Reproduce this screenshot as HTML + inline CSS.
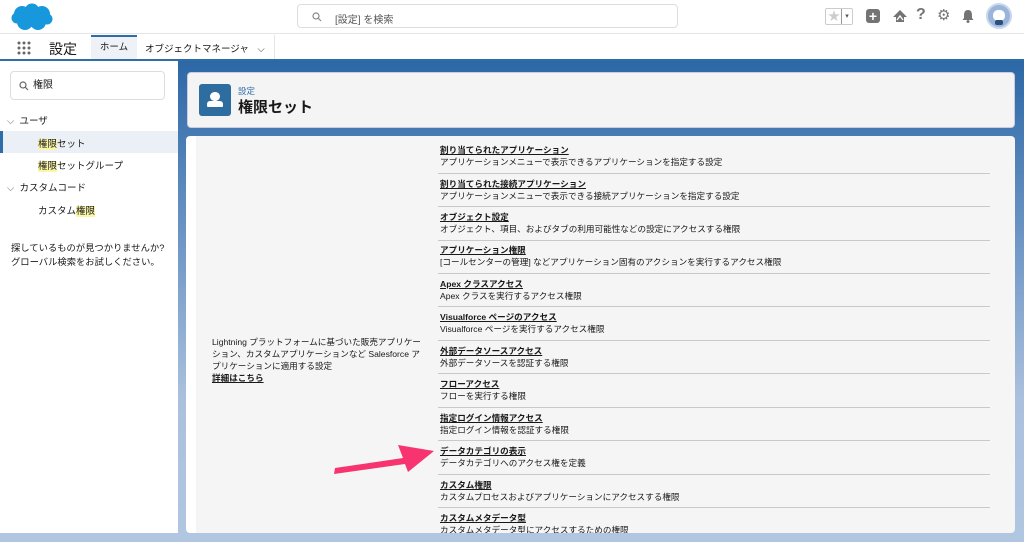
<!DOCTYPE html>
<html><head><meta charset="utf-8"><style>
*{box-sizing:border-box;margin:0;padding:0}
body{width:1024px;height:542px;overflow:hidden;font-family:"Liberation Sans","Noto Sans CJK JP",sans-serif;background:#fff;position:relative;color:#181818}
.top{position:absolute;left:0;top:0;width:1024px;height:34px;background:#fff;border-bottom:1px solid #e5e5e5}
.search{position:absolute;left:297px;top:4px;width:381px;height:24px;border:1px solid #ddd;border-radius:4px;font-size:10px;color:#555}
.nav{position:absolute;left:0;top:35px;width:1024px;height:26px;background:#fff;border-bottom:2px solid #2e6da8}
.bg{position:absolute;left:0;top:61px;width:1024px;height:481px;background:linear-gradient(#2c68a6,#6a93c4 35%,#aac0dd 70%,#b1c6e1)}
.side{position:absolute;left:0;top:61px;width:178px;height:481px;background:#fff}
.hl{background:#fbf6a8}
.card{position:absolute;background:#f4f4f4;border-radius:4px}
.row{position:absolute;left:440px;width:550px;font-size:8.6px;line-height:12px}
.row b{text-decoration:underline;font-weight:bold;display:block}
.line{position:absolute;left:438px;width:552px;height:1px;background:#c9c9c9}
</style></head><body>
<div class="top">
<svg style="position:absolute;left:11px;top:3px" width="42" height="28" viewBox="0 0 42 28"><g fill="#1798dc"><circle cx="11" cy="11" r="8"/><circle cx="21" cy="8" r="7.5"/><circle cx="31" cy="11" r="8"/><circle cx="14" cy="19" r="8"/><circle cx="27" cy="19" r="8"/><circle cx="6" cy="15" r="5.5"/><circle cx="36" cy="16" r="5.5"/></g></svg>
<div class="search"><svg style="position:absolute;left:14px;top:7px" width="10" height="10"><circle cx="4" cy="4" r="3" fill="none" stroke="#888" stroke-width="1.2"/><path d="M6 6 L9 9" stroke="#888" stroke-width="1.2"/></svg><span style="position:absolute;left:37px;top:6px">[設定] を検索</span></div>
<div style="position:absolute;left:825px;top:8px;width:28px;height:17px;border:1px solid #ccc;border-radius:2px;font-size:12px;color:#ccc;line-height:15px;padding-left:2px">★<span style="position:absolute;right:0;top:0;width:11px;height:15px;border-left:1px solid #999;font-size:7px;color:#555;text-align:center">▾</span></div>
<div style="position:absolute;left:866px;top:9px;width:14px;height:14px;background:#747474;border-radius:3px;color:#fff;font-size:14px;line-height:14px;text-align:center;font-weight:bold">+</div>
<svg style="position:absolute;left:892px;top:9px" width="16" height="14"><path d="M8 1 L15 8 L12 8 L12 13 L4 13 L4 8 L1 8 Z" fill="#747474"/><path d="M5 11 L8 7 L11 11" fill="none" stroke="#fff" stroke-width="1.3"/></svg>
<div style="position:absolute;left:916px;top:6px;font-size:16px;color:#747474;font-weight:bold">?</div>
<div style="position:absolute;left:937px;top:6px;font-size:15px;color:#747474">⚙</div>
<svg style="position:absolute;left:961px;top:9px" width="14" height="14"><path d="M7 1 C3.5 1 3 4 3 7 L3 9 L1.5 11 L12.5 11 L11 9 L11 7 C11 4 10.5 1 7 1 Z" fill="#747474"/><circle cx="7" cy="12.5" r="1.5" fill="#747474"/></svg>
<div style="position:absolute;left:986px;top:3px;width:26px;height:26px;border-radius:50%;background:#9ab5da;border:2px solid #c9d8ec"><div style="position:absolute;left:5px;top:5px;width:12px;height:11px;background:#fff;border-radius:5px"></div><div style="position:absolute;left:7px;top:15px;width:8px;height:5px;background:#2b4f7d;border-radius:2px"></div></div>
</div>
<div class="nav">
<svg style="position:absolute;left:17px;top:6px" width="14" height="14"><g fill="#666"><circle cx="2" cy="2" r="1.5"/><circle cx="7" cy="2" r="1.5"/><circle cx="12" cy="2" r="1.5"/><circle cx="2" cy="7" r="1.5"/><circle cx="7" cy="7" r="1.5"/><circle cx="12" cy="7" r="1.5"/><circle cx="2" cy="12" r="1.5"/><circle cx="7" cy="12" r="1.5"/><circle cx="12" cy="12" r="1.5"/></g></svg>
<div style="position:absolute;left:49px;top:4px;font-size:14px">設定</div>
<div style="position:absolute;left:91px;top:0;width:46px;height:24px;background:#eef1f6;border-top:2px solid #2e6da8;font-size:9.5px;text-align:center;line-height:21px">ホーム</div>
<div style="position:absolute;left:145px;top:6px;font-size:9.5px">オブジェクトマネージャ <span style="margin-left:6px;color:#555">⌵</span></div>
<div style="position:absolute;left:274px;top:0;width:1px;height:24px;background:#e5e5e5"></div>
</div>
<div class="bg"></div>
<div class="side">
<div style="position:absolute;left:10px;top:10px;width:155px;height:29px;border:1px solid #ddd;border-radius:4px;font-size:10px;line-height:27px;padding-left:22px"><svg style="position:absolute;left:8px;top:9px" width="10" height="10"><circle cx="4" cy="4" r="3" fill="none" stroke="#666" stroke-width="1.2"/><path d="M6 6 L9 9" stroke="#666" stroke-width="1.2"/></svg>権限</div>
<div style="position:absolute;left:7px;top:52px;font-size:9.5px"><span style="color:#777">⌵</span>&nbsp; ユーザ</div>
<div style="position:absolute;left:0;top:70px;width:178px;height:22px;background:#eaf0f6;border-left:3px solid #2e6da8"></div>
<div style="position:absolute;left:38px;top:75px;font-size:9.5px"><span class="hl">権限</span>セット</div>
<div style="position:absolute;left:38px;top:97px;font-size:9.5px"><span class="hl">権限</span>セットグループ</div>
<div style="position:absolute;left:7px;top:119px;font-size:9.5px"><span style="color:#777">⌵</span>&nbsp; カスタムコード</div>
<div style="position:absolute;left:38px;top:142px;font-size:9.5px">カスタム<span class="hl">権限</span></div>
<div style="position:absolute;left:11px;top:180px;font-size:9.3px;line-height:14px">探しているものが見つかりませんか?<br>グローバル検索をお試しください。</div>
</div>
<div class="card" style="left:187px;top:72px;width:828px;height:56px;border:1px solid #ccd">
<div style="position:absolute;left:11px;top:11px;width:32px;height:32px;background:#2e6da0;border-radius:3px"><div style="position:absolute;left:11px;top:8px;width:10px;height:9px;background:#fff;border-radius:5px"></div><div style="position:absolute;left:8px;top:17px;width:16px;height:6px;background:#fff;border-radius:3px 3px 1px 1px"></div></div>
<div style="position:absolute;left:50px;top:12px;font-size:8.5px;color:#2e6da8">設定</div>
<div style="position:absolute;left:50px;top:23px;font-size:15px;font-weight:bold">権限セット</div>
</div>
<div class="card" style="left:186px;top:136px;width:829px;height:397px;background:#f5f5f5;border-left:10px solid #fff;border-radius:4px"></div>
<div style="position:absolute;left:212px;top:336px;width:214px;font-size:8.6px;line-height:12px">Lightning プラットフォームに基づいた販売アプリケーション、カスタムアプリケーションなど Salesforce アプリケーションに適用する設定<br><b style="text-decoration:underline">詳細はこちら</b></div>
<div class="row" style="top:144px"><b>割り当てられたアプリケーション</b>アプリケーションメニューで表示できるアプリケーションを指定する設定</div>
<div class="line" style="top:173px"></div>
<div class="row" style="top:178px"><b>割り当てられた接続アプリケーション</b>アプリケーションメニューで表示できる接続アプリケーションを指定する設定</div>
<div class="line" style="top:206px"></div>
<div class="row" style="top:211px"><b>オブジェクト設定</b>オブジェクト、項目、およびタブの利用可能性などの設定にアクセスする権限</div>
<div class="line" style="top:240px"></div>
<div class="row" style="top:244px"><b>アプリケーション権限</b>[コールセンターの管理] などアプリケーション固有のアクションを実行するアクセス権限</div>
<div class="line" style="top:273px"></div>
<div class="row" style="top:278px"><b>Apex クラスアクセス</b>Apex クラスを実行するアクセス権限</div>
<div class="line" style="top:306px"></div>
<div class="row" style="top:311px"><b>Visualforce ページのアクセス</b>Visualforce ページを実行するアクセス権限</div>
<div class="line" style="top:340px"></div>
<div class="row" style="top:345px"><b>外部データソースアクセス</b>外部データソースを認証する権限</div>
<div class="line" style="top:373px"></div>
<div class="row" style="top:378px"><b>フローアクセス</b>フローを実行する権限</div>
<div class="line" style="top:407px"></div>
<div class="row" style="top:412px"><b>指定ログイン情報アクセス</b>指定ログイン情報を認証する権限</div>
<div class="line" style="top:440px"></div>
<div class="row" style="top:445px"><b>データカテゴリの表示</b>データカテゴリへのアクセス権を定義</div>
<div class="line" style="top:474px"></div>
<div class="row" style="top:479px"><b>カスタム権限</b>カスタムプロセスおよびアプリケーションにアクセスする権限</div>
<div class="line" style="top:507px"></div>
<div class="row" style="top:512px"><b>カスタムメタデータ型</b>カスタムメタデータ型にアクセスするための権限</div>
<svg style="position:absolute;left:0;top:0" width="1024" height="542"><path d="M334 474 L335 468 L403 458 L398 445 L434 451 L408 472 L405 464 Z" fill="#f73470"/></svg>
<div style="position:absolute;left:0;top:533px;width:1024px;height:9px;background:#b1c6e1"></div>
</body></html>
